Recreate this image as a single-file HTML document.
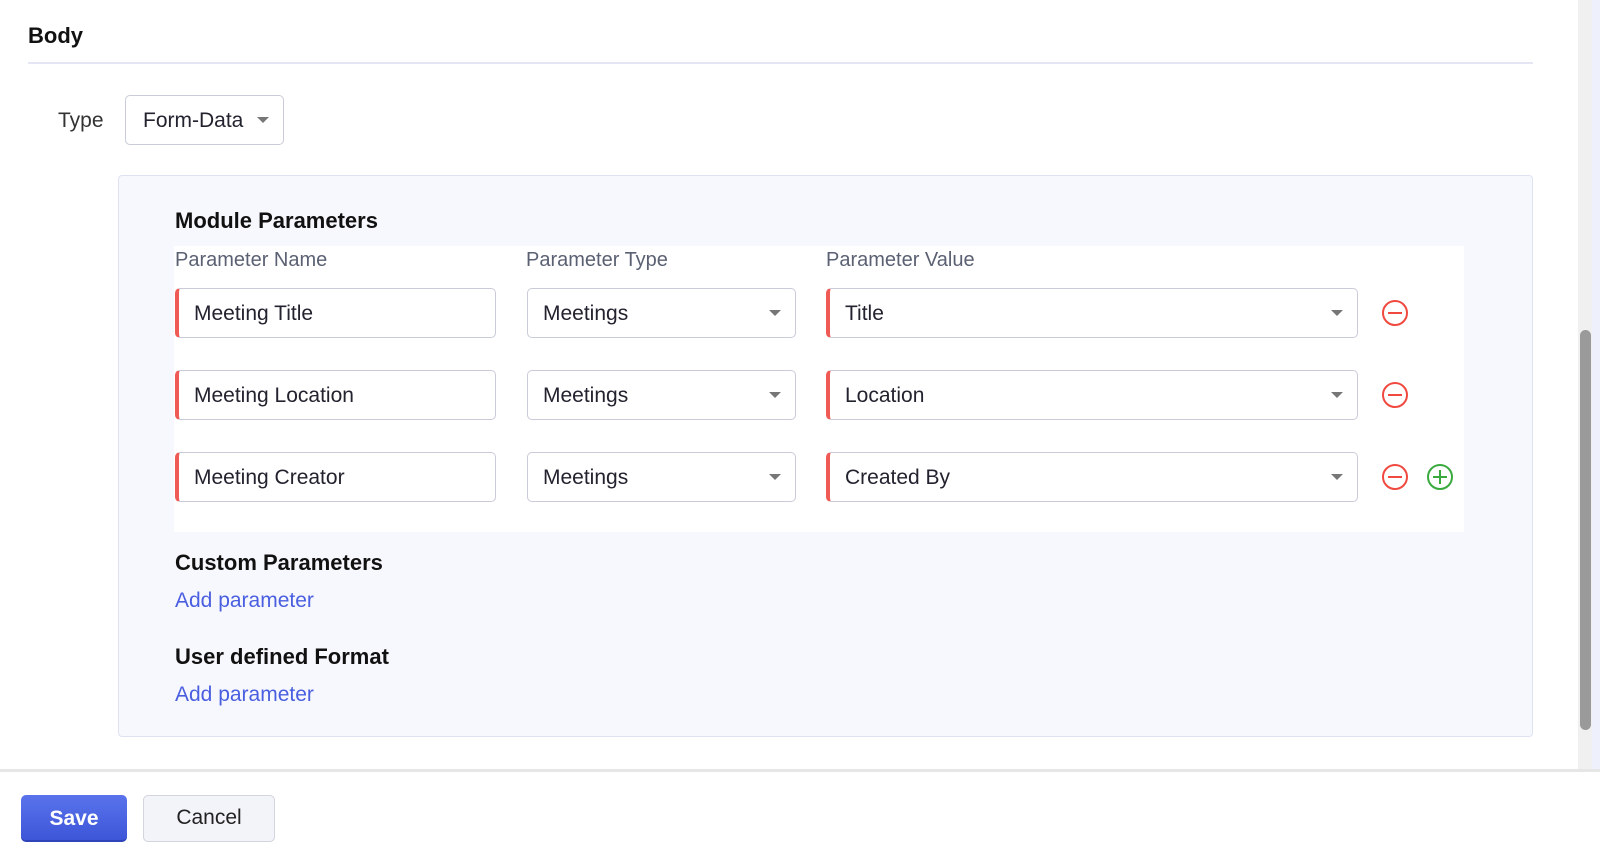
<!DOCTYPE html>
<html><head><style>
*{box-sizing:border-box;margin:0;padding:0}
body{width:1600px;height:864px;background:#fff;font-family:"Liberation Sans",sans-serif;color:#1f1f2b;position:relative;overflow:hidden}
.a{position:absolute}
.inp{position:absolute;height:50px;background:#fff;border:1.5px solid #c9cbd8;border-radius:5px;font-size:21px;line-height:49px;padding-left:15px;color:#23232f}
.req{border-left:4px solid #f05a55}
.car{position:absolute;right:14px;top:21px;width:0;height:0;border-left:6px solid transparent;border-right:6px solid transparent;border-top:6px solid #777}
.h{font-weight:bold;font-size:22px;color:#111}
.lbl{font-size:20px;color:#5b6173}
.lnk{font-size:21px;color:#4a5fe0}
</style></head><body>
<div class="a h" style="left:28px;top:23px;font-size:22px">Body</div>
<div class="a" style="left:28px;top:62px;width:1505px;height:2px;background:#e4e6f3"></div>
<div class="a" style="left:58px;top:109px;font-size:21px;color:#333">Type</div>
<div class="inp" style="left:125px;top:95px;width:159px;padding-left:17px">Form-Data<div class="car" style="right:14px"></div></div>
<div class="a" style="left:118px;top:175px;width:1415px;height:562px;background:#f7f8fd;border:1.5px solid #dfe2f0;border-radius:4px"></div>
<div class="a" style="left:174px;top:246px;width:1290px;height:286px;background:#fff"></div>
<div class="a h" style="left:175px;top:208px">Module Parameters</div>
<div class="a lbl" style="left:175px;top:249px">Parameter Name</div>
<div class="a lbl" style="left:526px;top:249px">Parameter Type</div>
<div class="a lbl" style="left:826px;top:249px">Parameter Value</div>

<div class="inp req" style="left:175px;top:288px;width:321px">Meeting Title</div>
<div class="inp" style="left:527px;top:288px;width:269px">Meetings<div class="car"></div></div>
<div class="inp req" style="left:826px;top:288px;width:532px">Title<div class="car"></div></div>

<div class="inp req" style="left:175px;top:370px;width:321px">Meeting Location</div>
<div class="inp" style="left:527px;top:370px;width:269px">Meetings<div class="car"></div></div>
<div class="inp req" style="left:826px;top:370px;width:532px">Location<div class="car"></div></div>

<div class="inp req" style="left:175px;top:452px;width:321px">Meeting Creator</div>
<div class="inp" style="left:527px;top:452px;width:269px">Meetings<div class="car"></div></div>
<div class="inp req" style="left:826px;top:452px;width:532px">Created By<div class="car"></div></div>

<svg class="a" style="left:1381px;top:299px" width="28" height="28"><circle cx="14" cy="14" r="12" fill="none" stroke="#f0493f" stroke-width="2"/><line x1="7" y1="14" x2="21" y2="14" stroke="#f0493f" stroke-width="2"/></svg>
<svg class="a" style="left:1381px;top:381px" width="28" height="28"><circle cx="14" cy="14" r="12" fill="none" stroke="#f0493f" stroke-width="2"/><line x1="7" y1="14" x2="21" y2="14" stroke="#f0493f" stroke-width="2"/></svg>
<svg class="a" style="left:1381px;top:463px" width="28" height="28"><circle cx="14" cy="14" r="12" fill="none" stroke="#f0493f" stroke-width="2"/><line x1="7" y1="14" x2="21" y2="14" stroke="#f0493f" stroke-width="2"/></svg>
<svg class="a" style="left:1426px;top:463px" width="28" height="28"><circle cx="14" cy="14" r="12" fill="none" stroke="#3aaa3f" stroke-width="2"/><line x1="7" y1="14" x2="21" y2="14" stroke="#3aaa3f" stroke-width="2"/><line x1="14" y1="7" x2="14" y2="21" stroke="#3aaa3f" stroke-width="2"/></svg>

<div class="a h" style="left:175px;top:550px">Custom Parameters</div>
<div class="a lnk" style="left:175px;top:589px">Add parameter</div>
<div class="a h" style="left:175px;top:644px">User defined Format</div>
<div class="a lnk" style="left:175px;top:683px">Add parameter</div>

<div class="a" style="left:1578px;top:0;width:14px;height:770px;background:#f0f0f0"></div>
<div class="a" style="left:1580px;top:330px;width:11px;height:400px;background:#9a9a9a;border-radius:6px"></div>
<div class="a" style="left:1592px;top:0;width:8px;height:770px;background:#eef0fb"></div>

<div class="a" style="left:0;top:769px;width:1600px;height:3px;background:#e6e6e6"></div>
<div class="a" style="left:21px;top:795px;width:106px;height:47px;background:linear-gradient(#5a73ec,#3d56d8);border-radius:5px;color:#fff;font-weight:bold;font-size:21px;text-align:center;line-height:47px;border-bottom:2px solid #2e44b8">Save</div>
<div class="a" style="left:143px;top:795px;width:132px;height:47px;background:#f3f4fa;border:1.5px solid #d2d4de;border-radius:5px;font-size:21px;text-align:center;line-height:44px;color:#222">Cancel</div>
</body></html>
